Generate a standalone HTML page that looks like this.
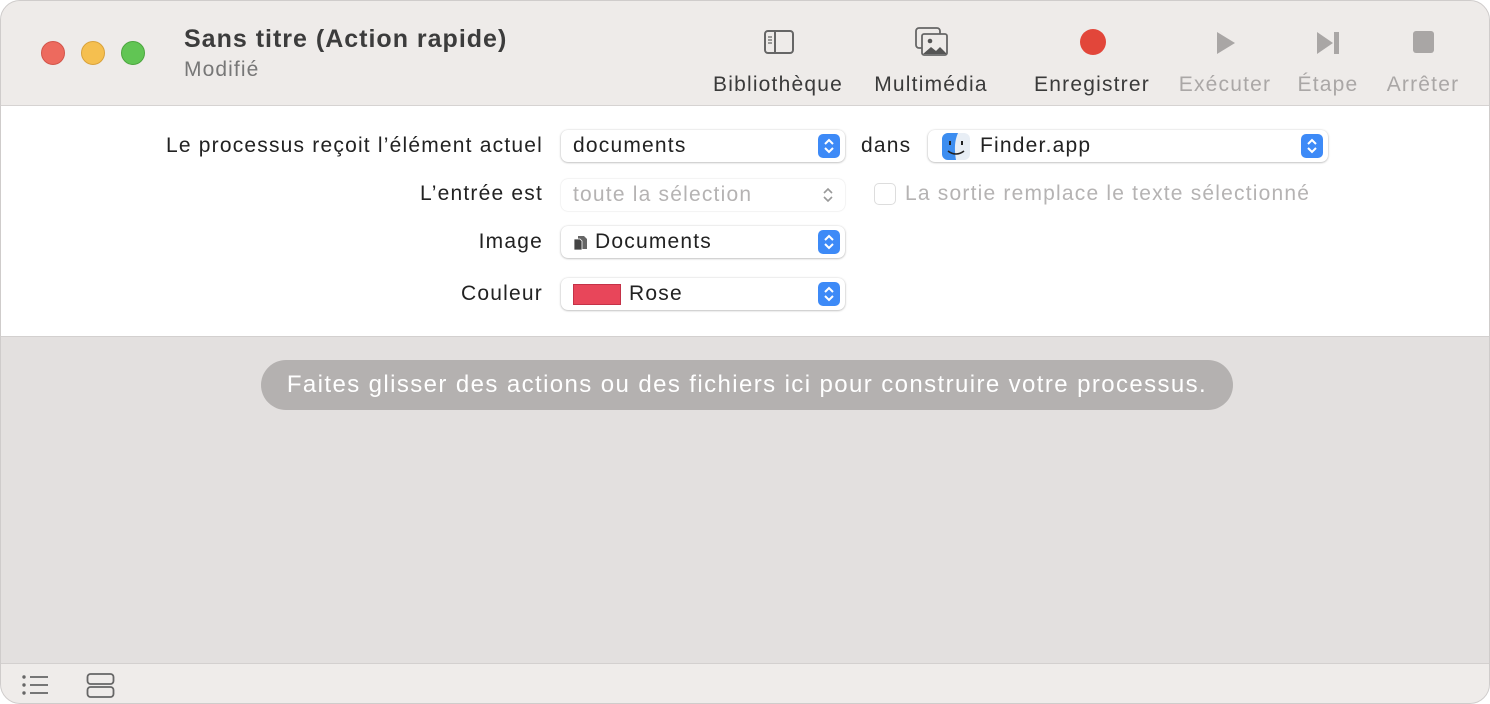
<!DOCTYPE html><html><head><meta charset="utf-8"><style>
*{box-sizing:border-box;margin:0;padding:0}
body{width:1490px;height:704px;background:#fff;font-family:"Liberation Sans",sans-serif;position:relative;overflow:hidden}
.win{position:absolute;left:0;top:0;width:1490px;height:704px;border-radius:20px;overflow:hidden;border:1px solid #cfcccb;background:#e3e0df}
.tb{position:absolute;left:0;top:0;width:100%;height:105px;background:#eeebe9;border-bottom:1px solid #d6d3d2}
.dot{position:absolute;top:40px;width:24px;height:24px;border-radius:50%}
.t{position:absolute;white-space:nowrap}
.lbl{font-size:21px;color:#3a3a3a;transform:translateX(-50%);letter-spacing:1.2px}
.dis{color:#aaa7a6}
.panel{position:absolute;left:0;top:105px;width:100%;height:231px;background:#fff;border-bottom:1px solid #d3d0cf;letter-spacing:1.2px}
.pop{position:absolute;height:32px;background:#fff;border-radius:7px;box-shadow:0 0.5px 2px rgba(0,0,0,.35);font-size:21px;color:#222;line-height:32px;padding-left:12px}
.step{position:absolute;right:5px;top:4px;width:22px;height:24px;border-radius:5px;background:#3d8af7}
.rl{position:absolute;font-size:21px;color:#222;right:946px;text-align:right;white-space:nowrap}
.bot{position:absolute;left:0;top:662px;width:100%;height:42px;background:#efecea;border-top:1px solid #d3d0cf}
</style></head><body><div class="win">
<div class="tb">
<div class="dot" style="left:40px;background:#ed6a5e;border:1px solid #d2554a"></div>
<div class="dot" style="left:80px;background:#f5bf4f;border:1px solid #d9a23b"></div>
<div class="dot" style="left:120px;background:#61c554;border:1px solid #4ca63f"></div>
<div class="t" style="left:183px;top:24px;font-size:25px;font-weight:bold;color:#3c3c3c;letter-spacing:1px">Sans titre (Action rapide)</div>
<div class="t" style="left:183px;top:57px;font-size:21px;color:#777;letter-spacing:1.1px">Modifié</div>
<svg style="position:absolute;left:763px;top:29px" width="30" height="24"><rect x="1" y="1" width="28" height="22" rx="3" fill="none" stroke="#666" stroke-width="2"/><line x1="11" y1="1" x2="11" y2="23" stroke="#666" stroke-width="2"/><path d="M4 7h4M4 10h4M4 13h4" stroke="#666" stroke-width="1.2"/></svg>
<svg style="position:absolute;left:914px;top:26px" width="34" height="30"><rect x="1" y="1" width="24" height="20" rx="3" fill="none" stroke="#666" stroke-width="1.8"/><rect x="7" y="7" width="25" height="21" rx="2" fill="#eeebe9" stroke="#666" stroke-width="1.8"/><circle cx="15" cy="14" r="2.3" fill="#555"/><path d="M8 27l8-7 5 4 4-4 6 6v1z" fill="#555"/></svg>
<div style="position:absolute;left:1079px;top:28px;width:26px;height:26px;border-radius:50%;background:#e2463a"></div>
<svg style="position:absolute;left:1214px;top:30px" width="22" height="24"><path d="M2 1l18 11L2 23z" fill="#a9a6a5"/></svg>
<svg style="position:absolute;left:1314px;top:30px" width="28" height="24"><path d="M2 1l16 11L2 23z" fill="#a9a6a5"/><rect x="19" y="1" width="5" height="22" fill="#a9a6a5"/></svg>
<div style="position:absolute;left:1412px;top:30px;width:21px;height:22px;border-radius:3px;background:#a9a6a5"></div>
<div class="t lbl" style="left:777px;top:72px">Bibliothèque</div>
<div class="t lbl" style="left:930px;top:72px">Multimédia</div>
<div class="t lbl" style="left:1091px;top:72px">Enregistrer</div>
<div class="t lbl dis" style="left:1224px;top:72px">Exécuter</div>
<div class="t lbl dis" style="left:1327px;top:72px">Étape</div>
<div class="t lbl dis" style="left:1422px;top:72px">Arrêter</div>
</div>
<div class="panel">
<div class="rl" style="top:28px">Le processus reçoit l’élément actuel</div>
<div class="rl" style="top:76px">L’entrée est</div>
<div class="rl" style="top:124px">Image</div>
<div class="rl" style="top:176px">Couleur</div>
<div class="pop" style="left:560px;top:24px;width:284px">documents<div class="step"><svg width="22" height="24"><path d="M7 10l4-4 4 4M7 14l4 4 4-4" fill="none" stroke="#fff" stroke-width="2"/></svg></div></div>
<div class="t" style="left:860px;top:28px;font-size:21px;color:#222">dans</div>
<div class="pop" style="left:927px;top:24px;width:400px;padding-left:52px">Finder.app
<svg style="position:absolute;left:14px;top:3px" width="28" height="27"><rect width="28" height="27" rx="6" fill="#e8eef5"/><path d="M0 6a6 6 0 0 1 6-6h10c-3 7-4 14-2 27H6a6 6 0 0 1-6-6z" fill="#3c8df0"/><path d="M8 8v4M20 8v4" stroke="#222" stroke-width="2"/><path d="M6 18c5 4 11 4 16 0" fill="none" stroke="#222" stroke-width="1.6"/></svg>
<div class="step"><svg width="22" height="24"><path d="M7 10l4-4 4 4M7 14l4 4 4-4" fill="none" stroke="#fff" stroke-width="2"/></svg></div></div>
<div class="pop" style="left:560px;top:73px;width:284px;color:#b5b3b3;box-shadow:0 0 1.5px rgba(0,0,0,.18)">toute la sélection<svg style="position:absolute;right:6px;top:4px" width="22" height="24"><path d="M7 10l4-4 4 4M7 14l4 4 4-4" fill="none" stroke="#999" stroke-width="1.6"/></svg></div>
<div style="position:absolute;left:873px;top:77px;width:22px;height:22px;border:1px solid #ddd;border-radius:5px"></div>
<div class="t" style="left:904px;top:76px;font-size:21px;color:#b5b3b3">La sortie remplace le texte sélectionné</div>
<div class="pop" style="left:560px;top:120px;width:284px;padding-left:34px">Documents<svg style="position:absolute;left:12px;top:9px" width="16" height="16"><path d="M5 1h6l3 3v10H5z" fill="#666"/><path d="M1 4h6l2 2v9H1z" fill="#444" stroke="#fff" stroke-width=".8"/></svg><div class="step"><svg width="22" height="24"><path d="M7 10l4-4 4 4M7 14l4 4 4-4" fill="none" stroke="#fff" stroke-width="2"/></svg></div></div>
<div class="pop" style="left:560px;top:172px;width:284px;padding-left:68px">Rose<div style="position:absolute;left:12px;top:6px;width:48px;height:21px;background:#e8465a;border:1.5px solid #c43248"></div><div class="step"><svg width="22" height="24"><path d="M7 10l4-4 4 4M7 14l4 4 4-4" fill="none" stroke="#fff" stroke-width="2"/></svg></div></div>
</div>
<div style="position:absolute;left:260px;top:359px;width:972px;height:50px;border-radius:25px;background:#b4b1b0;color:#fff;font-size:24px;letter-spacing:1.4px;line-height:50px;text-align:center;white-space:nowrap">Faites glisser des actions ou des fichiers ici pour construire votre processus.</div>
<div class="bot">
<svg style="position:absolute;left:20px;top:10px" width="30" height="22"><g fill="#666"><circle cx="3" cy="3" r="1.7"/><circle cx="3" cy="11" r="1.7"/><circle cx="3" cy="19" r="1.7"/></g><path d="M9 3h18M9 11h18M9 19h18" stroke="#666" stroke-width="1.8"/></svg>
<svg style="position:absolute;left:85px;top:9px" width="30" height="26"><rect x="1.5" y="1" width="26" height="10" rx="3" fill="none" stroke="#666" stroke-width="1.8"/><rect x="1.5" y="14" width="26" height="10" rx="3" fill="none" stroke="#666" stroke-width="1.8"/></svg>
</div>
</div></body></html>
